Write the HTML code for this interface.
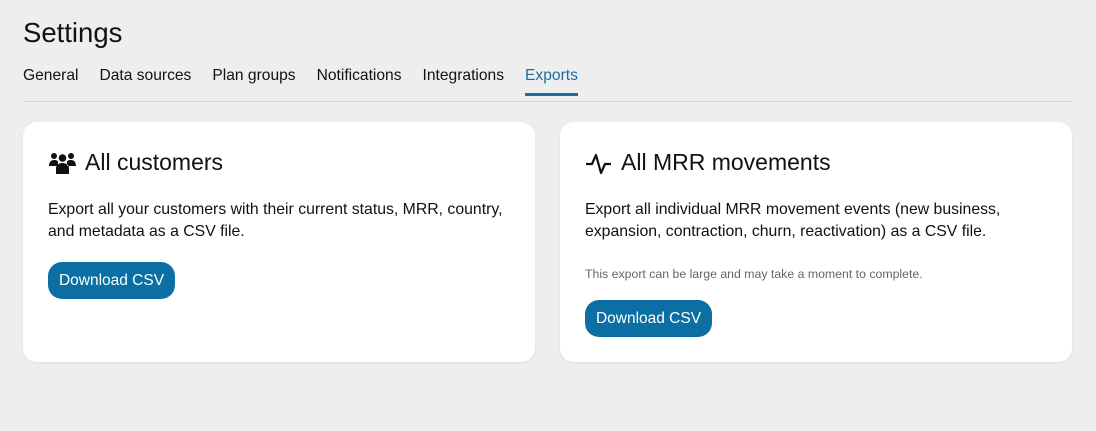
<!DOCTYPE html>
<html><head><style>
body{margin:0;width:1096px;height:431px;background:#eeeeee;font-family:"Liberation Sans",sans-serif;color:#111;position:relative;overflow:hidden}
.t{position:absolute;left:23px;top:17px;font-size:27.5px}
.tabs{position:absolute;left:23px;top:67px;font-size:15.6px;display:flex;gap:21px}
.tabs span{padding-bottom:11px}
.tabs .a{color:#1a6fa0;border-bottom:3px solid #1a6fa0;padding-bottom:8px}
.line{position:absolute;left:23px;top:101px;width:1049px;height:1px;background:#d4d4d4}
.card{position:absolute;top:122px;width:512px;height:240px;background:#fff;border-radius:14px;box-shadow:0 1px 3px rgba(0,0,0,.06)}
.card h2{position:absolute;left:25px;top:27px;margin:0;font-size:23px;font-weight:normal;display:flex;align-items:center;gap:8px}
.card p{position:absolute;left:25px;margin:0;font-size:15.8px;line-height:22px}
.small{font-size:12.3px!important;color:#666}
.btn{position:absolute;left:25px;background:#0b6fa3;color:#fff;font-size:15.5px;border-radius:14px;width:127px;height:37px;line-height:37px;text-align:center}
</style></head><body>
<div class="t">Settings</div>
<div class="tabs"><span>General</span><span>Data sources</span><span>Plan groups</span><span>Notifications</span><span>Integrations</span><span class="a">Exports</span></div>
<div class="line"></div>
<div class="card" style="left:23px">
<h2><svg width="29" height="22" viewBox="0 0 29 22"><circle cx="6" cy="4" r="3" fill="#111"/><circle cx="23" cy="4" r="3" fill="#111"/><circle cx="14.5" cy="6" r="3.8" fill="#111"/><path d="M1 14c0-4 2-6 5-6s4 1 4 2v4z M28 14c0-4-2-6-5-6s-4 1-4 2v4z M8 22v-6c0-3 3-5 6.5-5s6.5 2 6.5 5v6z" fill="#111"/></svg>All customers</h2>
<p style="top:77px">Export all your customers with their current status, MRR, country,<br>and metadata as a CSV file.</p>
<div class="btn" style="top:140px">Download CSV</div>
</div>
<div class="card" style="left:560px">
<h2><svg width="28" height="24" viewBox="0 0 28 24"><path d="M1 13h6l4-9 5 18 4-9h6" fill="none" stroke="#111" stroke-width="2.2" stroke-linejoin="round"/></svg>All MRR movements</h2>
<p style="top:77px">Export all individual MRR movement events (new business,<br>expansion, contraction, churn, reactivation) as a CSV file.</p>
<p class="small" style="top:141px">This export can be large and may take a moment to complete.</p>
<div class="btn" style="top:178px">Download CSV</div>
</div>
</body></html>
